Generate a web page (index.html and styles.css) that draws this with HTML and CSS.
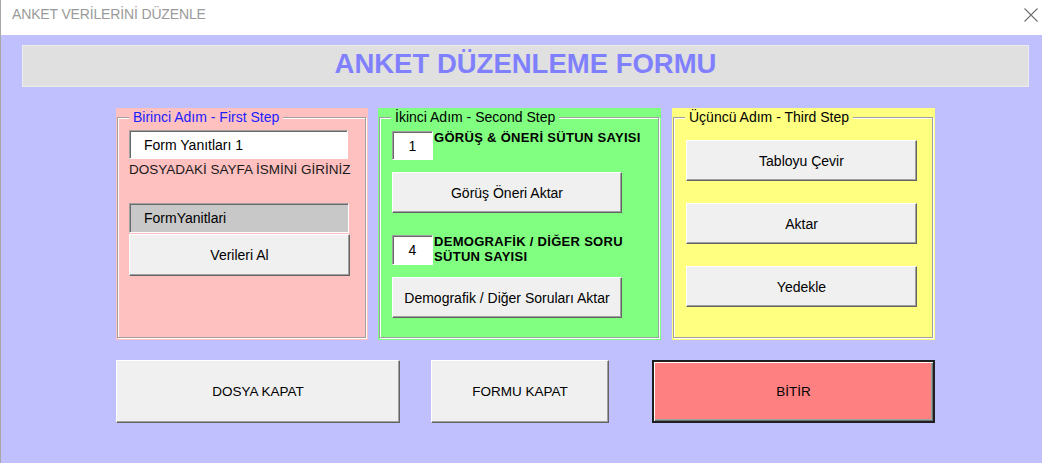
FILE: index.html
```html
<!DOCTYPE html>
<html lang="tr">
<head>
    <meta charset="UTF-8">
    <title>ANKET VERİLERİNİ DÜZENLE</title>
    <link rel="stylesheet" href="styles.css">
</head>
<body>
    <div class="window">
        <div class="titlebar">
            <span class="caption">ANKET VERİLERİNİ DÜZENLE</span>
            <svg class="close" width="14" height="14" viewBox="0 0 14 14">
                <path d="M0.5 0.5 L13.5 13.5 M13.5 0.5 L0.5 13.5" stroke="#707070" stroke-width="1.1" fill="none"/>
            </svg>
        </div>

        <div class="client">
            <div class="header">ANKET DÜZENLEME FORMU</div>

            <div class="steps">
                <!-- step 1 -->
                <div class="panel pink">
                    <fieldset class="frame">
                        <legend class="blue">Birinci Adım - First Step</legend>
                        <div class="step1">
                            <div class="textbox sheet">Form Yanıtları 1</div>
                            <div class="hint">DOSYADAKİ SAYFA İSMİNİ GİRİNİZ</div>
                            <div class="textbox sheet grey">FormYanitlari</div>
                            <button class="btn fetch">Verileri Al</button>
                        </div>
                    </fieldset>
                </div>

                <!-- step 2 -->
                <div class="panel green">
                    <fieldset class="frame">
                        <legend>İkinci Adım - Second Step</legend>
                        <div class="step2">
                            <div class="row">
                                <div class="textbox num">1</div>
                                <div class="label">GÖRÜŞ &amp; ÖNERİ SÜTUN SAYISI</div>
                            </div>
                            <button class="btn mid first">Görüş Öneri Aktar</button>
                            <div class="row second">
                                <div class="textbox num tall">4</div>
                                <div class="label narrow">DEMOGRAFİK / DİĞER SORU SÜTUN SAYISI</div>
                            </div>
                            <button class="btn mid">Demografik / Diğer Soruları Aktar</button>
                        </div>
                    </fieldset>
                </div>

                <!-- step 3 -->
                <div class="panel yellow">
                    <fieldset class="frame">
                        <legend>Üçüncü Adım - Third Step</legend>
                        <div class="step3">
                            <button class="btn side">Tabloyu Çevir</button>
                            <button class="btn side">Aktar</button>
                            <button class="btn side">Yedekle</button>
                        </div>
                    </fieldset>
                </div>
            </div>

            <div class="actions">
                <button class="btn big close-file">DOSYA KAPAT</button>
                <button class="btn big close-form">FORMU KAPAT</button>
                <button class="btn big finish">BİTİR</button>
            </div>
        </div>
    </div>
</body>
</html>
```

FILE: styles.css
```css
/* form window */
body {
    margin: 0;
    padding: 0;
    font-family: "Liberation Sans", Arial, sans-serif;
    color: #000;
}
.window {
    width: 1042px;
    height: 463px;
    box-sizing: border-box;
    border-left: 1px solid #a8a8a8;
    background-color: #c0c0ff;
    overflow: hidden;
}
.titlebar {
    height: 35px;
    background-color: #fff;
    display: flex;
    align-items: flex-start;
    justify-content: space-between;
    padding: 0 4px 0 11px;
}
.caption {
    margin-top: 6px;
    font-size: 14px;
    line-height: 17px;
    letter-spacing: -0.15px;
    color: #9a9a9a;
}
.close {
    margin-top: 8px;
}
.client {
    padding: 10px 0 0 21px;
}
.header {
    width: 1007px;
    height: 42px;
    box-sizing: border-box;
    border: 1px solid #ececec;
    background-color: #e0e0e0;
    padding-top: 1px;
    line-height: 34px;
    text-align: center;
    font-size: 27.5px;
    font-weight: bold;
    color: #8080ff;
}

/* three step panels */
.steps {
    display: flex;
    margin: 21px 0 0 94px;
    height: 232px;
}
.panel {
    box-sizing: border-box;
    padding: 1px 2px 2px 1px;
}
.pink {
    width: 252px;
    background-color: #ffc0c0;
}
.green {
    width: 283px;
    margin-left: 10px;
    background-color: #80ff80;
}
.yellow {
    width: 263px;
    margin-left: 11px;
    background-color: #ffff80;
}
.frame {
    height: 100%;
    box-sizing: border-box;
    margin: 0;
    padding: 0;
    min-width: 0;
    border: 1px solid #a0a0a0;
    box-shadow: 1px 1px 0 #fff, inset 1px 1px 0 #fff;
}
.frame legend {
    margin-left: 11px;
    padding: 0 4px;
    font-size: 14px;
    line-height: 16px;
}
.pink legend { background-color: #ffc0c0; }
.green legend { background-color: #80ff80; }
.yellow legend { background-color: #ffff80; }
.frame legend.blue {
    color: #2020ff;
}

/* inputs */
.textbox {
    box-sizing: border-box;
    background-color: #fff;
    border: 1px solid;
    border-color: #a0a0a0 #fff #fff #a0a0a0;
    box-shadow: inset 1px 1px 0 #696969;
    font-size: 14px;
    display: flex;
    align-items: center;
}
.sheet {
    width: 219px;
    height: 29px;
    padding-left: 14px;
}
.grey {
    width: 220px;
    height: 30px;
    margin-top: 25px;
    background-color: #c8c8c8;
}
.hint {
    margin-top: 3px;
    font-size: 13.5px;
    line-height: 16px;
    color: #1a1a1a;
}
.num {
    width: 41px;
    height: 29px;
    justify-content: center;
    flex: none;
}
.num.tall {
    height: 30px;
}

/* buttons */
.btn {
    display: flex;
    align-items: center;
    justify-content: center;
    box-sizing: border-box;
    padding: 0;
    margin: 0;
    font-family: "Liberation Sans", Arial, sans-serif;
    font-size: 14px;
    color: #000;
    background-color: #f0f0f0;
    border: 1px solid;
    border-color: #fff #646464 #646464 #fff;
    box-shadow: inset -1px -1px 0 #a0a0a0;
}
.fetch {
    width: 221px;
    height: 42px;
    margin-top: 1px;
}

.step1 {
    padding: 5px 0 0 11px;
}
.step2 {
    padding: 6px 0 0 12px;
}
.row {
    display: flex;
    align-items: flex-start;
}
.row.second {
    margin-top: 22px;
}
.label {
    margin: -1px 0 0 1px;
    font-size: 13px;
    font-weight: bold;
    line-height: 15px;
    letter-spacing: 0.3px;
    white-space: nowrap;
}
.label.narrow {
    white-space: normal;
    width: 200px;
}
.mid {
    width: 230px;
    height: 41px;
    margin-top: 12px;
}
.step3 {
    padding: 15px 0 0 12px;
}
.side {
    width: 231px;
    height: 41px;
    margin-bottom: 22px;
}

/* bottom row */
.actions {
    display: flex;
    margin: 20px 0 0 94px;
}
.big {
    height: 63px;
    font-size: 13.5px;
}
.close-file {
    width: 284px;
}
.close-form {
    width: 178px;
    margin-left: 31px;
}
.finish {
    width: 283px;
    margin-left: 43px;
    background-color: #ff8080;
    border: 2px solid #1e1e1e;
    box-shadow: inset 1px 1px 0 #fff, inset -1px -1px 0 #6a7474, inset -2px -2px 0 #a0a0a0;
}
```
